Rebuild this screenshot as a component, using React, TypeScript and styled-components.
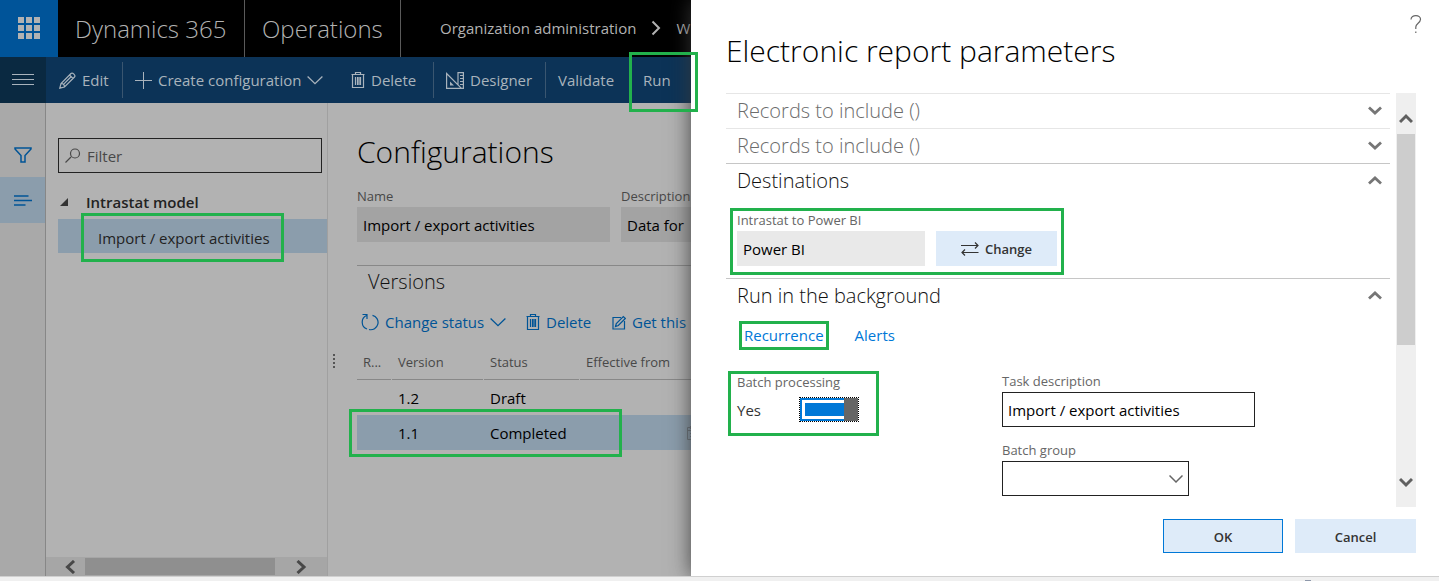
import React from 'react';
import styled, { createGlobalStyle, css } from 'styled-components';

const GREEN = '#22b14c';
const LINK = '#005496';
const MUTED = '#484848';
const SELECTED = '#8b9dac';

const GlobalStyle = createGlobalStyle`
  * { box-sizing: border-box; }
  html, body { margin: 0; }
  body {
    font-family: "Open Sans", "Noto Sans", sans-serif;
    font-size: 15px;
    line-height: 20px;
    color: #000;
    background: #fff;
  }
  button, input, select { font: inherit; color: inherit; margin: 0; }
  button { border: 0; padding: 0; background: none; white-space: nowrap; cursor: pointer; }
  h1, h2, p { margin: 0; font-weight: 400; }
  svg { display: block; flex: none; }
`;

/* Callout frame drawn over the control it surrounds: top, right, bottom, left */
const callout = (inset: string) => css`
  position: relative;
  &::after {
    content: "";
    position: absolute;
    inset: ${inset};
    border: 3px solid ${GREEN};
    z-index: 3;
    pointer-events: none;
  }
`;

const Page = styled.div`
  display: flex;
  flex-direction: column;
  height: 100vh;
  min-height: 540px;
`;
const Shell = styled.div`
  flex: 1;
  min-height: 0;
  display: flex;
`;
const StatusBar = styled.footer`
  height: 5px;
  flex: none;
  border-top: 1px solid #d0d0d0;
  background: #f0f0f0;
  display: flex;
  justify-content: flex-end;
  align-items: flex-end;
  padding-right: 128px;
  overflow: hidden;
`;
const StatusDot = styled.span`
  width: 6px;
  height: 1px;
  background: #8e98aa;
`;

/* ---------- dimmed workspace ---------- */
const Workspace = styled.div`
  flex: 1;
  min-width: 0;
  display: flex;
  flex-direction: column;
  background: #b2b2b2;
`;
const TopBar = styled.header`
  height: 57px;
  flex: none;
  display: flex;
  background: #000;
  color: #b2b2b2;
  overflow: hidden;
  white-space: nowrap;
`;
const Waffle = styled.button`
  width: 58px;
  flex: none;
  background: #005499;
  display: flex;
  align-items: center;
  justify-content: center;
  padding-bottom: 2px;
`;
const Brand = styled.div<{ $width: number }>`
  width: ${p => p.$width}px;
  flex: none;
  padding-left: 17px;
  border-right: 1px solid #5a5a5a;
  font-size: 24px;
  font-weight: 300;
  display: flex;
  align-items: center;
`;
const Crumbs = styled.nav`
  display: flex;
  align-items: center;
  gap: 15px;
  padding: 0 0 2px 39px;
`;
const CommandBar = styled.div`
  height: 46px;
  flex: none;
  display: flex;
  align-items: center;
  background: #0c3357;
  color: #a9b3bc;
`;
const Hamburger = styled.button`
  width: 46px;
  height: 46px;
  flex: none;
  background: #0a2941;
  display: flex;
  align-items: center;
  justify-content: center;
`;
const Command = styled.button<{ $width: number; $divided?: boolean; $pad?: number }>`
  width: ${p => p.$width}px;
  height: 36px;
  flex: none;
  display: flex;
  align-items: center;
  gap: 6px;
  padding-left: ${p => p.$pad ?? 12}px;
  border-right: ${p => (p.$divided ? '1px solid #3a5670' : '0')};
`;
const RunCommand = styled(Command)`
  ${callout('-10px -6px -14px -1px')}
`;
const Columns = styled.div`
  flex: 1;
  min-height: 0;
  display: flex;
`;
const Rail = styled.nav`
  width: 46px;
  flex: none;
  padding-top: 29px;
  background: #a9a9a9;
  border-right: 1px solid #878787;
`;
const RailButton = styled.button<{ $active?: boolean }>`
  width: 45px;
  height: ${p => (p.$active ? 46 : 45)}px;
  display: flex;
  align-items: center;
  justify-content: center;
  background: ${p => (p.$active ? SELECTED : 'none')};
  color: ${LINK};
`;
const TreePanel = styled.aside`
  width: 282px;
  flex: none;
  display: flex;
  flex-direction: column;
  padding-top: 35px;
  border-right: 1px solid #a0a0a0;
`;
const FilterBox = styled.label`
  margin: 0 5px 0 12px;
  height: 35px;
  border: 1px solid #222;
  display: flex;
  align-items: center;
  gap: 6px;
  padding-left: 6px;
  color: ${MUTED};
`;
const FilterInput = styled.input`
  flex: 1;
  min-width: 0;
  border: 0;
  padding: 0;
  background: none;
  outline: none;
  &::placeholder { color: ${MUTED}; opacity: 1; }
`;
const Tree = styled.div`
  flex: 1;
  padding: 12px 0 0 12px;
`;
const TreeRow = styled.div<{ $active?: boolean }>`
  height: 34px;
  display: flex;
  align-items: center;
  gap: 18px;
  padding: ${p => (p.$active ? '4px 0 0 40px' : '0 0 0 2px')};
  font-weight: ${p => (p.$active ? 400 : 600)};
  color: #222;
  background: ${p => (p.$active ? SELECTED : 'none')};
  ${p => p.$active && callout('-6px 43px -9px 23px')}
`;
const HScroll = styled.div`
  height: 19px;
  flex: none;
  display: flex;
  align-items: center;
  background: #a6a6a6;
  color: #484848;
`;
const HArrow = styled.span<{ $width: number }>`
  width: ${p => p.$width}px;
  flex: none;
  display: flex;
  justify-content: center;
`;
const HThumb = styled.span`
  flex: 1;
  height: 17px;
  background: #8f8f8f;
`;
const Form = styled.main`
  flex: 1;
  min-width: 0;
  overflow: hidden;
  display: flex;
  align-items: flex-start;
`;
const Grip = styled.span`
  width: 29px;
  flex: none;
  padding: 251px 0 0 5px;
  color: #555;
`;
const FormBody = styled.div`
  flex: 1;
  min-width: 0;
  padding-top: 29px;
`;
const FormTitle = styled.h1`
  font-size: 30px;
  font-weight: 300;
  line-height: 40px;
  white-space: nowrap;
`;
const FieldRow = styled.div`
  display: flex;
  gap: 11px;
  margin-top: 14px;
  padding-bottom: 23px;
  border-bottom: 1px solid #888;
`;
const Field = styled.label<{ $width: number; $top?: number }>`
  width: ${p => p.$width}px;
  flex: none;
  display: flex;
  flex-direction: column;
  font-size: 13px;
  margin-top: ${p => p.$top ?? 0}px;
`;
const FieldText = styled.span<{ $dim?: boolean }>`
  line-height: 21px;
  color: ${p => (p.$dim ? MUTED : '#666')};
`;
const ReadOnly = styled.input<{ $dim?: boolean }>`
  height: 35px;
  width: 100%;
  border: 0;
  padding: 0 6px;
  font-size: 15px;
  color: #000;
  background: ${p => (p.$dim ? '#a3a3a3' : '#e9e9e9')};
`;
const VersionsTitle = styled.h2`
  padding: 2px 0 0 11px;
  font-size: 20px;
  font-weight: 300;
  line-height: 28px;
  color: #111;
`;
const Actions = styled.div`
  height: 46px;
  display: flex;
  align-items: center;
  padding-left: 4px;
  margin-top: 3px;
`;
const Action = styled.button<{ $width: number }>`
  width: ${p => p.$width}px;
  flex: none;
  display: flex;
  align-items: center;
  gap: 6px;
  color: ${LINK};
`;
const Table = styled.table`
  width: 347px;
  table-layout: fixed;
  border-collapse: separate;
  border-spacing: 0;
`;
const Th = styled.th<{ $width: number }>`
  width: ${p => p.$width}px;
  height: 35px;
  padding: 0 0 2px 6px;
  text-align: left;
  font-size: 13px;
  font-weight: 400;
  white-space: nowrap;
  color: ${MUTED};
  background: linear-gradient(#888, #888) left bottom / calc(100% - 1px) 1px no-repeat;
`;
const Row = styled.tr<{ $active?: boolean }>`
  background: ${p => (p.$active ? SELECTED : 'none')};
  ${p => p.$active && callout('-6px 82px -7px -8px')}
`;
const Td = styled.td`
  height: 35px;
  padding: 0 3px 0 6px;
  & > svg { margin-left: auto; color: #6c757d; }
`;

/* ---------- dialog ---------- */
const Dialog = styled.section`
  width: 748px;
  flex: none;
  position: relative;
  z-index: 1;
  display: flex;
  flex-direction: column;
  padding: 0 23px 23px 35px;
  background: #fff;
  box-shadow: 0 0 20px rgba(56, 56, 56, 0.9);
  clip-path: inset(0 0 0 -30px);
`;
const DialogTop = styled.div`
  height: 93px;
  flex: none;
  display: flex;
  justify-content: space-between;
`;
const DialogTitle = styled.h1`
  padding-top: 31px;
  font-size: 30px;
  font-weight: 300;
  line-height: 40px;
`;
const Help = styled.button`
  align-self: flex-start;
  margin: 14px -8px 0 0;
  width: 16px;
  color: #666;
  display: flex;
  justify-content: center;
`;
const DialogBody = styled.div`
  flex: 1;
  min-height: 0;
  display: flex;
  gap: 6px;
`;
const Sections = styled.div`
  flex: 1;
  min-width: 0;
  overflow: hidden;
`;
const Section = styled.section<{ $disabled?: boolean }>`
  border-top: 1px solid ${p => (p.$disabled ? '#e6e6e6' : '#c6c6c6')};
`;
const SectionHead = styled.button<{ $disabled?: boolean }>`
  width: 100%;
  height: 34px;
  display: flex;
  align-items: center;
  justify-content: space-between;
  padding: 0 8px 0 11px;
  font-size: 20px;
  font-weight: 300;
  color: ${p => (p.$disabled ? '#6c6c6c' : '#111')};
`;
const Destination = styled.div`
  width: 320px;
  height: 80px;
  margin-left: 11px;
  padding-top: 12px;
  display: flex;
  align-items: flex-start;
  gap: 11px;
  ${callout('10px -7px 3px -7px')}
`;
const ChangeButton = styled.button`
  width: 121px;
  height: 35px;
  margin-top: 21px;
  display: flex;
  align-items: center;
  justify-content: center;
  gap: 6px;
  background: #deebf9;
  color: #333;
  font-size: 13px;
  font-weight: 600;
`;
const Links = styled.div`
  display: flex;
  gap: 31px;
  padding: 12px 0 0 18px;
`;
const TextLink = styled.a<{ $marked?: boolean }>`
  color: #0078d7;
  text-decoration: none;
  ${p => p.$marked && callout('-4px -5px -5px -5px')}
`;
const BatchGrid = styled.div`
  display: grid;
  grid-template-columns: 265px 1fr;
  padding: 26px 0 0 11px;
  align-items: start;
`;
const Batch = styled.label`
  width: 122px;
  display: grid;
  grid-template-columns: 62px 60px;
  align-items: center;
  row-gap: 3px;
  font-size: 13px;
  ${callout('0 -20px -14px -9px')}
`;
const BatchText = styled.span`
  grid-column: 1 / -1;
  line-height: 23px;
  color: #666;
`;
const BatchValue = styled.span`
  font-size: 15px;
  color: #333;
`;
const Toggle = styled.input`
  appearance: none;
  width: 60px;
  height: 25px;
  border: 1px dotted #000;
  background:
    linear-gradient(#666, #666) right / 14px 100% no-repeat,
    linear-gradient(#0078d7, #0078d7) 5px 5px / 44px 13px no-repeat,
    linear-gradient(#fff, #fff) 2px 2px / 44px 19px no-repeat,
    #0078d7;
  background-clip: padding-box;
`;
const TextBox = styled.input`
  width: 100%;
  height: 35px;
  padding: 0 5px;
  border: 1px solid #222;
  font-size: 15px;
`;
const SelectBox = styled.span`
  display: grid;
  align-items: center;
  & > * { grid-area: 1 / 1; }
  & > svg { justify-self: end; margin-right: 6px; color: #666; pointer-events: none; }
`;
const Select = styled.select`
  appearance: none;
  width: 100%;
  height: 35px;
  border: 1px solid #222;
  border-radius: 0;
  background: #fff;
`;
const VScroll = styled.div`
  width: 20px;
  flex: none;
  display: flex;
  flex-direction: column;
  align-items: center;
  background: #efefef;
  color: #606060;
`;
const VArrow = styled.span<{ $height: number; $pad?: number }>`
  height: ${p => p.$height}px;
  padding-top: ${p => p.$pad ?? 0}px;
  display: flex;
  align-items: center;
`;
const VThumb = styled.span`
  flex: 211;
  width: 18px;
  background: #cdcdcd;
`;
const VTrack = styled.span`
  flex: 112;
`;
const Buttons = styled.div`
  flex: none;
  display: flex;
  justify-content: flex-end;
  gap: 12px;
  padding-top: 12px;
`;
const DialogButton = styled.button<{ $primary?: boolean }>`
  width: ${p => (p.$primary ? 120 : 121)}px;
  height: 34px;
  padding-top: 2px;
  background: #deebf9;
  border: ${p => (p.$primary ? '1px solid #0078d7' : '0')};
  color: #333;
  font-size: 13px;
  font-weight: 600;
`;

/* ---------- icons ---------- */
const Stroke = ({ w, h, d, sw = 1 }: { w: number; h: number; d: string; sw?: number }) => (
  <svg width={w} height={h} viewBox={`0 0 ${w} ${h}`} fill="none" stroke="currentColor" strokeWidth={sw} aria-hidden="true">
    <path d={d} />
  </svg>
);
const Chevron = () => <Stroke w={16} h={16} sw={1.3} d="M.6 4.5 8 11.7 15.4 4.5" />;
const Trash = () => (
  <Stroke w={14} h={18} sw={1.2} d="M.5 3.500h13M4.500 3V1.500h5V3M1.500 4v12.500h11V4M4.500 6v8M6.500 6v8M8 6v8M9.500 6v8" />
);
const Waffles = () => (
  <svg width="22" height="22" viewBox="0 0 22 22" fill="#b2b2b2" aria-hidden="true">
    {[0, 8, 16].map(y => [0, 8, 16].map(x => <rect key={`${x}-${y}`} x={x} y={y} width="6" height="6" />))}
  </svg>
);
const SectionChevron = ({ up }: { up?: boolean }) => (
  <svg width="14" height="10" viewBox="0 0 14 10" fill="none" stroke="#767676" strokeWidth="2.8" aria-hidden="true">
    <path d={up ? 'M1 7.500 7 2 13 7.500' : 'M1 1.500 7 7 13 1.500'} />
  </svg>
);

export default function App() {
  return (
    <Page>
      <GlobalStyle />
      <Shell>
        <Workspace>
          <TopBar>
            <Waffle aria-label="App launcher"><Waffles /></Waffle>
            <Brand $width={187}>Dynamics 365</Brand>
            <Brand $width={156}>Operations</Brand>
            <Crumbs>
              <span>Organization administration</span>
              <Stroke w={10} h={16} sw={2} d="M1.500 1.500 8 8 1.500 14.500" />
              <span>W</span>
            </Crumbs>
          </TopBar>
          <CommandBar>
            <Hamburger aria-label="Menu"><Stroke w={22} h={12} d="M0 .5h22M0 5.500h22M0 10.500h22" /></Hamburger>
            <Command $width={77} $divided $pad={13}>
              <Stroke w={17} h={17} sw={1.2} d="M.8 16.200 2 11.500 12 1.500C13.500 0 17 3.500 15.500 5L5.500 15ZM10.500 3l3.500 3.500M2 11.500c2 0 3.500 1.500 3.500 3.500M4 12.800l7.800-7.800" />
              Edit
            </Command>
            <Command $width={216}>
              <Stroke w={17} h={17} d="M8.500 0v17M0 8.500h17" />
              Create configuration
              <Chevron />
            </Command>
            <Command $width={95} $divided>
              <Trash />
              Delete
            </Command>
            <Command $width={112} $divided>
              <svg width="18" height="17" viewBox="0 0 18 17" fill="none" stroke="currentColor" strokeWidth="1.2" aria-hidden="true">
                <path d="M.6 1.500v14.900h14.900ZM12 12.500V.6h5.400v15.800h-2" />
                <path d="M4 9.500v4h4ZM14 3h3v1h-3ZM14 6h3v1h-3ZM14 9h3v1h-3ZM14 12h3v1h-3Z" fill="currentColor" stroke="none" />
              </svg>
              Designer
            </Command>
            <Command $width={84} $divided>Validate</Command>
            <RunCommand $width={62} $pad={13}>Run</RunCommand>
          </CommandBar>
          <Columns>
            <Rail>
              <RailButton aria-label="Show filters">
                <Stroke w={18} h={16} sw={1.5} d="M1 1h16v1l-6 6.500V15H7V8.500L1 2Z" />
              </RailButton>
              <RailButton $active aria-label="Show list">
                <Stroke w={18} h={11} sw={1.5} d="M0 1h14.500M0 5.500h18M0 10h11.500" />
              </RailButton>
            </Rail>
            <TreePanel>
              <FilterBox>
                <Stroke w={16} h={16} sw={1.2} d="M.5 14.500 6 9M14.500 5.500a4.500 4.500 0 1 1-9 0a4.500 4.500 0 1 1 9 0" />
                <FilterInput placeholder="Filter" aria-label="Filter" />
              </FilterBox>
              <Tree>
                <TreeRow>
                  <svg width="8" height="8" viewBox="0 0 8 8" fill="#333" aria-hidden="true"><path d="M8 0v8H0Z" /></svg>
                  Intrastat model
                </TreeRow>
                <TreeRow $active>Import / export activities</TreeRow>
              </Tree>
              <HScroll>
                <HArrow $width={39}><Stroke w={2} h={14} d="" /><Stroke w={18} h={14} sw={3} d="M16 1 9.500 7l6.500 6" /></HArrow>
                <HThumb />
                <HArrow $width={52}><Stroke w={12} h={14} sw={3} d="M2.500 1 9 7l-6.500 6" /></HArrow>
              </HScroll>
            </TreePanel>
            <Form>
              <Grip>
                <svg width="2" height="15" viewBox="0 0 2 15" fill="currentColor" aria-hidden="true">
                  <path d="M0 0h2v2H0zM0 4h2v2H0zM0 8h2v2H0zM0 12h2v2H0z" />
                </svg>
              </Grip>
              <FormBody>
                <FormTitle>Configurations</FormTitle>
                <FieldRow>
                  <Field $width={253}>
                    <FieldText $dim>Name</FieldText>
                    <ReadOnly $dim readOnly value="Import / export activities" />
                  </Field>
                  <Field $width={253}>
                    <FieldText $dim>Description</FieldText>
                    <ReadOnly $dim readOnly value="Data for" />
                  </Field>
                </FieldRow>
                <VersionsTitle>Versions</VersionsTitle>
                <Actions>
                  <Action $width={165}>
                    <Stroke w={18} h={18} sw={1.2} d="M5.500 2.500A7.300 7.300 0 0 0 6 16M11.500 2.300A7.300 7.300 0 0 1 8 16.500M1.500 1.500h4.500v4.500" />
                    Change status
                    <Chevron />
                  </Action>
                  <Action $width={86}>
                    <Trash />
                    Delete
                  </Action>
                  <Action $width={80}>
                    <Stroke w={14} h={15} sw={1.2} d="M9 2.500H1v11.500h11.500V6M3.500 11.500l.8-3 7-7 2 2-7 7Z" />
                    Get this
                  </Action>
                </Actions>
                <Table>
                  <thead>
                    <tr>
                      <Th $width={35}>R...</Th>
                      <Th $width={92}>Version</Th>
                      <Th $width={96}>Status</Th>
                      <Th $width={124}>Effective from</Th>
                    </tr>
                  </thead>
                  <tbody>
                    <Row><Td /><Td>1.2</Td><Td>Draft</Td><Td /></Row>
                    <Row $active>
                      <Td /><Td>1.1</Td><Td>Completed</Td>
                      <Td><Stroke w={14} h={14} d="M.5 1.500h13v12H.5ZM.5 4.500h13M3.500 0v3M10.500 0v3M3 7.500h8M3 10.500h8" /></Td>
                    </Row>
                  </tbody>
                </Table>
              </FormBody>
            </Form>
          </Columns>
        </Workspace>
        <Dialog role="dialog" aria-label="Electronic report parameters">
          <DialogTop>
            <DialogTitle>Electronic report parameters</DialogTitle>
            <Help aria-label="Help">
              <Stroke w={12} h={20} sw={1.2} d="M1 5.500C1 0 11 .5 10.500 5.500C10.300 9 5.800 9.500 5.800 13V15M5.800 17.500v1.500" />
            </Help>
          </DialogTop>
          <DialogBody>
            <Sections>
              <Section $disabled>
                <SectionHead $disabled aria-expanded="false">Records to include ()<SectionChevron /></SectionHead>
              </Section>
              <Section $disabled>
                <SectionHead $disabled aria-expanded="false">Records to include ()<SectionChevron /></SectionHead>
              </Section>
              <Section>
                <SectionHead aria-expanded="true">Destinations<SectionChevron up /></SectionHead>
                <Destination>
                  <Field $width={188}>
                    <FieldText>Intrastat to Power BI</FieldText>
                    <ReadOnly readOnly value="Power BI" />
                  </Field>
                  <ChangeButton>
                    <Stroke w={18} h={14} sw={1.2} d="M0 3.500h17M14 .5l3 3-3 3M17.500 10.500H1M4 7.500l-3 3 3 3" />
                    Change
                  </ChangeButton>
                </Destination>
              </Section>
              <Section>
                <SectionHead aria-expanded="true">Run in the background<SectionChevron up /></SectionHead>
                <Links>
                  <TextLink $marked href="#recurrence">Recurrence</TextLink>
                  <TextLink href="#alerts">Alerts</TextLink>
                </Links>
                <BatchGrid>
                  <Batch>
                    <BatchText>Batch processing</BatchText>
                    <BatchValue>Yes</BatchValue>
                    <Toggle type="checkbox" role="switch" defaultChecked />
                  </Batch>
                  <div>
                    <Field $width={253}>
                      <FieldText>Task description</FieldText>
                      <TextBox defaultValue="Import / export activities" />
                    </Field>
                    <Field $width={187} $top={13}>
                      <FieldText>Batch group</FieldText>
                      <SelectBox>
                        <Select defaultValue=""><option value="" /></Select>
                        <Stroke w={14} h={10} sw={1.5} d="M.5 1.500 7 8l6.500-6.500" />
                      </SelectBox>
                    </Field>
                  </div>
                </BatchGrid>
              </Section>
            </Sections>
            <VScroll>
              <VArrow $height={41} $pad={10}><Stroke w={14} h={12} sw={3} d="M1 9 7 3l6 6" /></VArrow>
              <VThumb />
              <VTrack />
              <VArrow $height={50} $pad={2}><Stroke w={14} h={12} sw={3} d="M1 2 7 8l6-6" /></VArrow>
            </VScroll>
          </DialogBody>
          <Buttons>
            <DialogButton $primary>OK</DialogButton>
            <DialogButton>Cancel</DialogButton>
          </Buttons>
        </Dialog>
      </Shell>
      <StatusBar><StatusDot /></StatusBar>
    </Page>
  );
}
